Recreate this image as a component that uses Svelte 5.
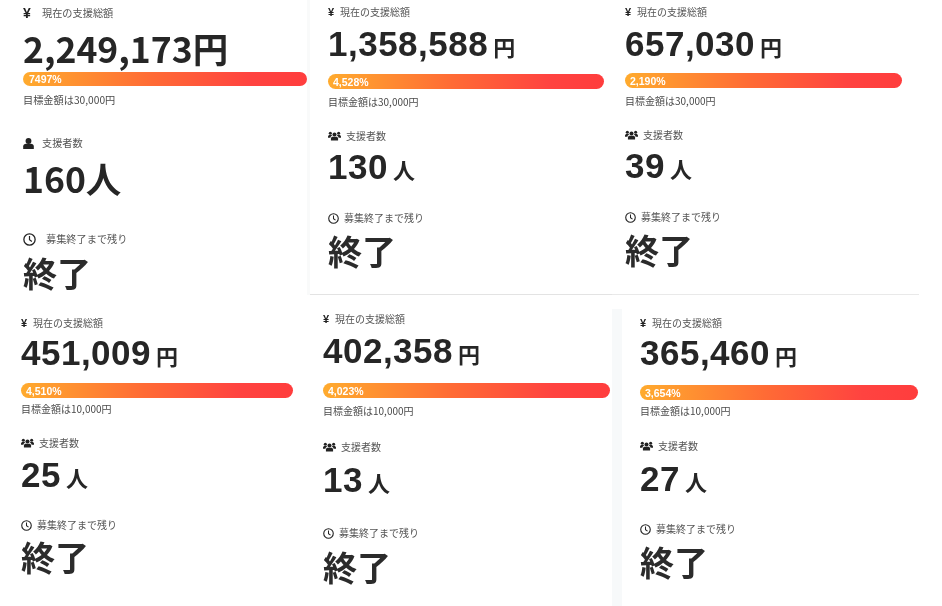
<script>
	const panels = [
		{ cls: 'p1', amount: '2,249,173', pct: '7497%', goal: '30,000', people: 160, single: true },
		{ cls: 'p2', amount: '1,358,588', pct: '4,528%', goal: '30,000', people: 130 },
		{ cls: 'p3', amount: '657,030', pct: '2,190%', goal: '30,000', people: 39 },
		{ cls: 'p4', amount: '451,009', pct: '4,510%', goal: '10,000', people: 25 },
		{ cls: 'p5', amount: '402,358', pct: '4,023%', goal: '10,000', people: 13 },
		{ cls: 'p6', amount: '365,460', pct: '3,654%', goal: '10,000', people: 27 }
	];
</script>

<main class="sheet">
	{#each panels as p}
		<section class="panel {p.cls}">
			<div class="label first">
				<span class="yen">¥</span>
				<span>現在の支援総額</span>
			</div>
			<div class="figure amount">{p.amount}<span class="unit">円</span></div>
			<div class="bar"><span>{p.pct}</span></div>
			<div class="goal">目標金額は{p.goal}円</div>

			<div class="label people">
				{#if p.single}
					<svg class="ico user" viewBox="0 0 12 12">
						<ellipse cx="6" cy="3.3" rx="3.2" ry="3.3" fill="currentColor" />
						<path d="M0.2 12V9.4C0.2 7.6 1.6 6.4 3.4 6.4H8.6C10.4 6.4 11.8 7.6 11.8 9.4V12Z" fill="currentColor" />
					</svg>
				{:else}
					<svg class="ico group" viewBox="0 0 16 12">
						<circle cx="8" cy="4.2" r="2.5" fill="currentColor" />
						<circle cx="2.9" cy="2.6" r="1.9" fill="currentColor" />
						<circle cx="13.1" cy="2.6" r="1.9" fill="currentColor" />
						<path d="M3.6 11.5V9.2C3.6 7.6 4.8 6.8 6.2 6.8H9.8C11.2 6.8 12.4 7.6 12.4 9.2V11.5Z" fill="currentColor" />
						<path d="M0 8V7C0 5.6 1 4.9 2.2 4.9H3.8C4.3 4.9 4.7 5.1 5 5.4C3.9 6 3.1 6.9 3 8Z" fill="currentColor" />
						<path d="M16 8V7C16 5.6 15 4.9 13.8 4.9H12.2C11.7 4.9 11.3 5.1 11 5.4C12.1 6 12.9 6.9 13 8Z" fill="currentColor" />
					</svg>
				{/if}
				<span>支援者数</span>
			</div>
			<div class="figure count">{p.people}<span class="unit">人</span></div>

			<div class="label clock">
				<svg class="ico dial" viewBox="0 0 12 12">
					<circle cx="6" cy="6" r="5.2" fill="none" stroke="currentColor" stroke-width="1.2" />
					<path d="M6 2.8V6.2L8.2 7.8" fill="none" stroke="currentColor" stroke-width="1.1" />
				</svg>
				<span>募集終了まで残り</span>
			</div>
			<div class="ended">終了</div>
		</section>
	{/each}
</main>

<style>
	:global(body) {
		margin: 0;
		background: #fff;
	}

	.sheet {
		display: grid;
		grid-template-columns: 310px 302px 330px;
		grid-template-rows: 295px 311px;
		width: 942px;
		height: 606px;
		overflow: hidden;
		background: #fff;
		color: #2b2b2b;
		font-family: 'Noto Sans CJK JP', 'Noto Sans', sans-serif;
		filter: blur(0.4px);
	}

	.panel {
		position: relative;
		display: flex;
		flex-direction: column;
		align-items: flex-start;
		box-sizing: border-box;
		padding: var(--pt) 0 0 var(--px);
	}

	.p1 {
		--pt: 5px; --px: 23px; --bar: 284px;
		--m1: 7px; --m2: 4px; --m3: 6px; --m4: 27px; --m5: 7px; --m6: 33px; --m7: 4px;
		border-right: 3px solid #f9fafa;
		width: 310px;
	}
	.p2 {
		--pt: 4px; --px: 18px; --bar: 276px;
		--m1: 4px; --m2: 10px; --m3: 5px; --m4: 18px; --m5: 3px; --m6: 23px; --m7: 3px;
		border-bottom: 1px solid #e3e3e3;
	}
	.p3 {
		--pt: 4px; --px: 13px; --bar: 277px;
		--m1: 4px; --m2: 9px; --m3: 5px; --m4: 18px; --m5: 3px; --m6: 23px; --m7: 3px;
		border-bottom: 1px solid #e9e9e9;
		width: 307px;
	}
	.p4 {
		--pt: 20px; --px: 21px; --bar: 272px;
		--m1: 2px; --m2: 10px; --m3: 3px; --m4: 18px; --m5: 4px; --m6: 22px; --m7: 2px;
	}
	.p5 {
		--pt: 16px; --px: 13px; --bar: 287px;
		--m1: 4px; --m2: 12px; --m3: 5px; --m4: 20px; --m5: 5px; --m6: 25px; --m7: 4px;
	}
	.p6 {
		--pt: 20px; --px: 28px; --bar: 278px;
		--m1: 2px; --m2: 12px; --m3: 3px; --m4: 19px; --m5: 5px; --m6: 22px; --m7: 3px;
	}

	/* grey sliver between the last two screenshots */
	.p6::before {
		content: '';
		position: absolute;
		left: 0;
		top: 14px;
		bottom: 0;
		width: 10px;
		background: #f7f9fa;
	}

	.label {
		display: flex;
		align-items: center;
		height: 16px;
		font-size: 10px;
		line-height: 16px;
		color: #555;
		white-space: nowrap;
	}

	.first {
		gap: 5px;
	}
	.people {
		gap: 5px;
		margin-top: var(--m4);
	}
	.clock {
		gap: 5px;
		margin-top: var(--m6);
	}

	.yen {
		width: 7px;
		font-family: 'Liberation Sans', sans-serif;
		font-size: 11px;
		font-weight: 700;
		color: #222;
	}

	.ico {
		display: block;
		flex: none;
		color: #222;
	}
	.group {
		width: 13px;
		height: 10px;
	}
	.user {
		width: 11px;
		height: 11px;
	}
	.dial {
		width: 11px;
		height: 11px;
	}

	.figure {
		height: 40px;
		font-family: 'Liberation Sans', 'Noto Sans CJK JP', sans-serif;
		font-size: 35px;
		font-weight: 700;
		line-height: 40px;
		letter-spacing: 0.5px;
		color: #262626;
		white-space: nowrap;
	}
	.amount {
		margin-top: var(--m1);
	}
	.count {
		margin-top: var(--m5);
	}
	.unit {
		margin-left: 5px;
		font-family: 'Noto Sans CJK JP', sans-serif;
		font-size: 22px;
		font-weight: 700;
		letter-spacing: 0;
	}

	.bar {
		display: flex;
		align-items: center;
		box-sizing: border-box;
		width: var(--bar);
		height: 15px;
		margin-top: var(--m2);
		padding-left: 5px;
		border-radius: 8px;
		background: linear-gradient(90deg, #ffab2e 0%, #ff6b35 45%, #ff4340 80%, #ff3d3d 100%);
		font-family: 'Liberation Sans', sans-serif;
		font-size: 10.5px;
		font-weight: 700;
		color: #fff;
	}

	.goal {
		height: 16px;
		margin-top: var(--m3);
		font-size: 10px;
		line-height: 16px;
		color: #4a4a4a;
		white-space: nowrap;
	}

	.ended {
		height: 44px;
		margin-top: var(--m7);
		font-size: 34px;
		font-weight: 700;
		line-height: 44px;
		color: #2b2b2b;
	}

	/* the first screenshot uses the web font for its numbers */
	.p1 .figure {
		font-family: 'Noto Sans CJK JP', sans-serif;
		font-size: 35.5px;
		letter-spacing: 0;
	}
	.p1 .unit {
		margin-left: 0;
		font-size: 35.5px;
		font-weight: 700;
	}
	.p1 .label,
	.p1 .goal {
		font-size: 10.2px;
	}
	.p1 .first {
		gap: 10px;
	}
	.p1 .people {
		gap: 8px;
	}
	.p1 .clock {
		gap: 10px;
	}
	.p1 .dial {
		width: 13px;
		height: 13px;
	}
	.p1 .yen {
		font-size: 14px;
		width: 9px;
	}
	.p1 .bar {
		padding-left: 6px;
	}
</style>
